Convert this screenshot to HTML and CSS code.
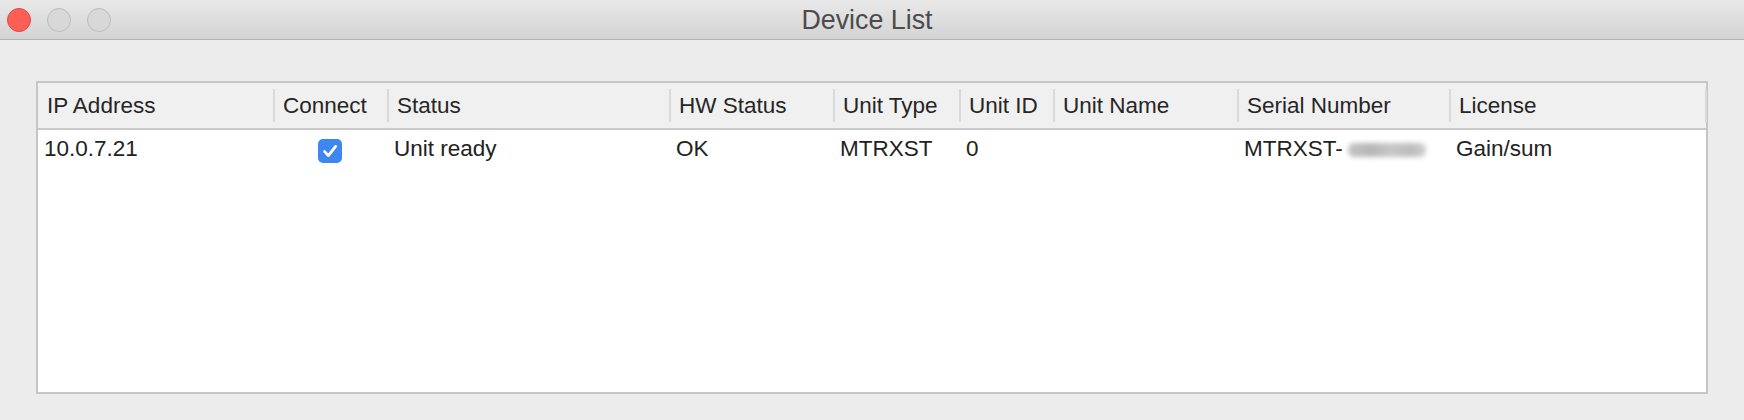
FILE: index.html
```html
<!DOCTYPE html>
<html>
<head>
<meta charset="utf-8">
<title>Device List</title>
<link rel="stylesheet" href="styles.css">
</head>
<body>
<div class="window">
  <div class="titlebar">
    <div class="lights">
      <span class="light close"></span>
      <span class="light off"></span>
      <span class="light off"></span>
    </div>
    <div class="title">Device List</div>
    <div class="spacer"></div>
  </div>
  <div class="content">
    <div class="table">
      <div class="thead">
        <div class="th"><span class="hl">IP Address</span></div>
        <div class="th"><span class="hl">Connect</span></div>
        <div class="th"><span class="hl">Status</span></div>
        <div class="th"><span class="hl">HW Status</span></div>
        <div class="th"><span class="hl">Unit Type</span></div>
        <div class="th"><span class="hl">Unit ID</span></div>
        <div class="th"><span class="hl">Unit Name</span></div>
        <div class="th"><span class="hl">Serial Number</span></div>
        <div class="th"><span class="hl">License</span></div>
      </div>
      <div class="row">
        <div class="td">10.0.7.21</div>
        <div class="td center">
          <span class="checkbox">
            <svg viewBox="0 0 24 24" width="24" height="24"><path d="M6.6 12.6 L10.4 16.6 L17.6 7.4" fill="none" stroke="#fff" stroke-width="2.8" stroke-linecap="round" stroke-linejoin="round"/></svg>
          </span>
        </div>
        <div class="td">Unit ready</div>
        <div class="td">OK</div>
        <div class="td">MTRXST</div>
        <div class="td">0</div>
        <div class="td"></div>
        <div class="td">MTRXST-<span class="blur"></span></div>
        <div class="td">Gain/sum</div>
      </div>
    </div>
  </div>
</div>
</body>
</html>
```

FILE: styles.css
```css
* { box-sizing: border-box; }
html, body {
  margin: 0;
  padding: 0;
  background: #ececec;
  font-family: "Liberation Sans", Arial, sans-serif;
  color: #242424;
}
.window {
  width: 1744px;
  height: 420px;
  overflow: hidden;
}
.titlebar {
  height: 40px;
  border-bottom: 1px solid #b3b3b3;
  background: linear-gradient(#e9e9e9, #d3d3d3);
  display: grid;
  grid-template-columns: 1fr auto 1fr;
  align-items: center;
}
.lights {
  display: flex;
  gap: 16px;
  padding-left: 7px;
  padding-top: 1px;
  align-items: center;
}
.light {
  width: 24px;
  height: 24px;
  border-radius: 50%;
  display: block;
}
.light.close {
  background: #fd5f57;
  border: 1px solid #de4a43;
}
.light.off {
  background: #d8d8d8;
  border: 1px solid #bcbcbc;
}
.title {
  font-size: 26.8px;
  color: #4b4b4b;
  margin-right: 10px;
  line-height: 1;
  padding-top: 1px;
}
.content {
  padding: 41px 36px 0 36px;
}
.table {
  width: 1672px;
  height: 313px;
  border: 2px solid #c6c6c6;
  background: #ffffff;
}
.thead, .row {
  display: grid;
  grid-template-columns: 236px 114px 282px 164px 126px 94px 184px 212px 256px;
}
.thead {
  height: 47px;
  background: #f0f0f0;
  border-bottom: 2px solid #cacaca;
}
.th {
  padding: 6px 0;
  display: flex;
}
.hl {
  flex: 1;
  display: flex;
  align-items: center;
  padding-left: 9px;
  margin-right: -1px;
  border-right: 2px solid #dadada;
  font-size: 22.5px;
  color: #262626;
  white-space: nowrap;
}
.row {
  height: 36px;
}
.td {
  display: flex;
  align-items: center;
  padding-left: 6px;
  padding-top: 2px;
  font-size: 22.5px;
  color: #222222;
  white-space: nowrap;
}
.td.center {
  justify-content: center;
  padding-left: 0;
  padding-top: 5px;
  padding-right: 2px;
}
.checkbox {
  width: 24px;
  height: 24px;
  border-radius: 5px;
  background: #3f87f0;
  display: block;
}
.checkbox svg { display: block; }
.blur {
  display: inline-block;
  width: 78px;
  height: 14px;
  margin-left: 5px;
  margin-top: 1px;
  border-radius: 6px;
  background: linear-gradient(90deg, #c4c4c4, #b6b6b6 30%, #c8c8c8 55%, #bcbcbc 80%, #d0d0d0);
  filter: blur(2.5px);
}
```
